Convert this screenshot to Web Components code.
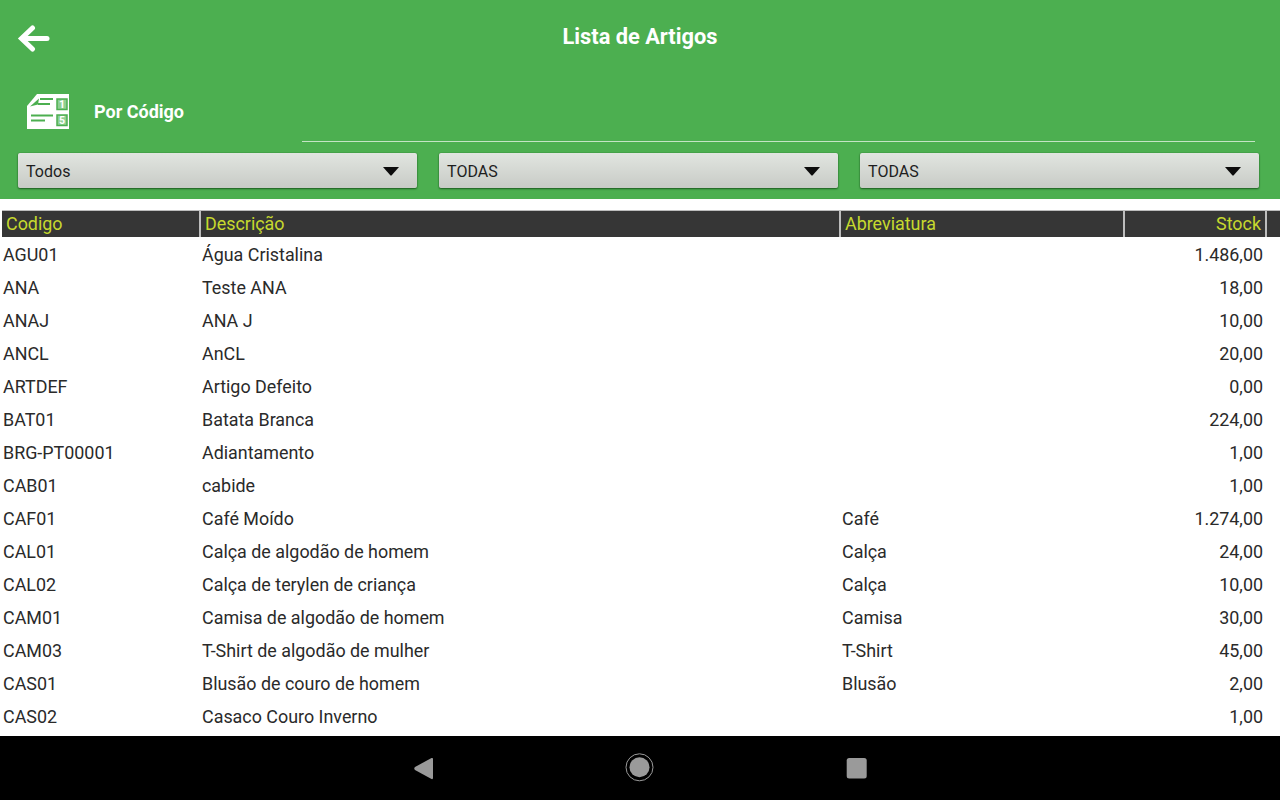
<!DOCTYPE html>
<html lang="pt">
<head>
<meta charset="utf-8">
<title>Lista de Artigos</title>
<style>
  html, body { margin: 0; padding: 0; height: 100%; overflow: hidden; background: #fff; font-family: Roboto, sans-serif; }
</style>
</head>
<body>
<app-screen>
  <top-bar title-text="Lista de Artigos" mode="Por Código" slot="top">
    <drop-down label="Todos"></drop-down>
    <drop-down label="TODAS"></drop-down>
    <drop-down label="TODAS"></drop-down>
  </top-bar>
  <artigos-table></artigos-table>
  <nav-bar slot="bottom"></nav-bar>
</app-screen>

<script>
class AppScreen extends HTMLElement {
  constructor () {
    super()
    this.attachShadow({ mode: 'open' })
  }

  connectedCallback () {
    this.shadowRoot.innerHTML = /* html */`
      <style>
        :host { display: flex; flex-direction: column; width: 1280px; height: 800px; overflow: hidden; }
        .content { flex: 1; min-height: 0; overflow: hidden; }
      </style>
      <slot name="top"></slot>
      <div class="content"><slot></slot></div>
      <slot name="bottom"></slot>
    `
  }
}

class TopBar extends HTMLElement {
  constructor () {
    super()
    this.attachShadow({ mode: 'open' })
  }

  connectedCallback () {
    this.shadowRoot.innerHTML = /* html */`
      <style>
        :host { display: block; height: 199px; background: #4caf50; color: #fff; box-sizing: border-box; }
        .title-row { display: grid; grid-template-columns: 60px 1fr 60px; height: 72px; align-items: center; }
        .back { display: block; margin: 6px 0 0 17px; }
        h1 { margin: 2px 0 0; font-size: 21.8px; font-weight: 700; text-align: center; line-height: 68px; }
        .mode-row { display: flex; height: 70px; padding: 0 25px 0 27px; }
        .mode { display: flex; align-items: center; width: 275px; flex: none; height: 80px; margin-top: -1px; }
        .mode svg { flex: none; }
        .mode span { margin-left: 25px; font-size: 18px; font-weight: 700; }
        .line { flex: 1; height: 1px; background: #c4e4c5; align-self: flex-end; }
        .filters { display: flex; gap: 22px; padding: 11px 20px 0 18px; }
      </style>
      <div class="title-row">
        <svg class="back" width="33" height="28" viewBox="0 0 33 28" fill="none" stroke="#fff" stroke-width="5" stroke-linecap="round" stroke-linejoin="miter">
          <path d="M30 13.5H6"/>
          <path d="M15.500 3 4.500 13.500 15.500 24"/>
        </svg>
        <h1>${this.getAttribute('title-text')}</h1>
        <span></span>
      </div>
      <div class="mode-row">
        <div class="mode">
          <svg width="42" height="35" viewBox="0 0 42 35">
            <path d="M10 0H42V35H0V12Z" fill="#fff"/>
            <path d="M3 12.500 12 4.500 11 10.500Z" fill="#4caf50"/>
            <path d="M13 5H26M11 10H23M4 21.500H26M4 26.500H18" stroke="#4caf50" stroke-width="2"/>
            <rect x="30" y="5" width="10" height="10.500" fill="#8fcf92" stroke="#4caf50" stroke-width="1.500"/>
            <rect x="30" y="21" width="10" height="10.500" fill="#8fcf92" stroke="#4caf50" stroke-width="1.500"/>
            <text x="35" y="14.200" font-family="Roboto, sans-serif" font-size="10.500" font-weight="700" fill="#fff" text-anchor="middle">1</text>
            <text x="35" y="30.200" font-family="Roboto, sans-serif" font-size="10.500" font-weight="700" fill="#fff" text-anchor="middle">5</text>
          </svg>
          <span>${this.getAttribute('mode')}</span>
        </div>
        <div class="line"></div>
      </div>
      <div class="filters"><slot></slot></div>
    `
  }
}

class DropDown extends HTMLElement {
  constructor () {
    super()
    this.attachShadow({ mode: 'open' })
  }

  connectedCallback () {
    this.shadowRoot.innerHTML = /* html */`
      <style>
        :host {
          display: flex; align-items: center; justify-content: space-between;
          width: 399px; height: 35px; box-sizing: border-box; padding: 2px 17px 0 8px;
          background: linear-gradient(#e1e5e0, #c8cbc6);
          border-radius: 2px;
          box-shadow: 0 1px 2px rgba(0, 40, 0, .6), 0 0 1px rgba(0, 40, 0, .55);
          color: #1e1e1e; font-size: 16px; letter-spacing: .05px;
        }
        svg { display: block; margin-top: -2px; }
      </style>
      <span>${this.getAttribute('label')}</span>
      <svg width="18" height="10" viewBox="0 0 18 10"><path d="M1 1H17L9.500 9.500H8.500Z" fill="#0c0c0c"/></svg>
    `
  }
}

class ArtigosTable extends HTMLElement {
  constructor () {
    super()
    this.attachShadow({ mode: 'open' })
  }

  connectedCallback () {
    this.loadData()
    this.render()
  }

  loadData () {
    this.data = [
      ['AGU01', 'Água Cristalina', '', '1.486,00'],
      ['ANA', 'Teste ANA', '', '18,00'],
      ['ANAJ', 'ANA J', '', '10,00'],
      ['ANCL', 'AnCL', '', '20,00'],
      ['ARTDEF', 'Artigo Defeito', '', '0,00'],
      ['BAT01', 'Batata Branca', '', '224,00'],
      ['BRG-PT00001', 'Adiantamento', '', '1,00'],
      ['CAB01', 'cabide', '', '1,00'],
      ['CAF01', 'Café Moído', 'Café', '1.274,00'],
      ['CAL01', 'Calça de algodão de homem', 'Calça', '24,00'],
      ['CAL02', 'Calça de terylen de criança', 'Calça', '10,00'],
      ['CAM01', 'Camisa de algodão de homem', 'Camisa', '30,00'],
      ['CAM03', 'T-Shirt de algodão de mulher', 'T-Shirt', '45,00'],
      ['CAS01', 'Blusão de couro de homem', 'Blusão', '2,00'],
      ['CAS02', 'Casaco Couro Inverno', '', '1,00']
    ]
  }

  render () {
    const rows = this.data.map((row) => `
      <div class="row">
        <span>${row[0]}</span>
        <span>${row[1]}</span>
        <span>${row[2]}</span>
        <span class="num">${row[3]}</span>
      </div>
    `).join('')

    this.shadowRoot.innerHTML = /* html */`
      <style>
        :host { display: block; padding-top: 11px; font-size: 17.9px; color: #2a2a2a; background: #fff; }
        .head, .row { display: grid; grid-template-columns: 199px 640px 284px 142px 1fr; }
        .head { height: 28px; margin-left: 2px; }
        .head span {
          display: block; background: #363636; color: #c6d92e; line-height: 26px; padding-left: 4px;
          border-top: 1px solid #bdbdbd; border-right: 2px solid #bdbdbd; box-sizing: border-box; height: 27px;
        }
        .head span:last-child { border-right: 0; }
        .head .num { text-align: right; padding: 0 4px 0 0; }
        .row { height: 33px; line-height: 33px; padding-left: 3px; }
        .row span { white-space: nowrap; }
        .row .num { text-align: right; padding-right: 5px; }
      </style>
      <div class="head">
        <span>Codigo</span><span>Descrição</span><span>Abreviatura</span><span class="num">Stock</span><span></span>
      </div>
      ${rows}
    `
  }
}

class NavBar extends HTMLElement {
  constructor () {
    super()
    this.attachShadow({ mode: 'open' })
  }

  connectedCallback () {
    this.shadowRoot.innerHTML = /* html */`
      <style>
        :host { display: flex; justify-content: center; align-items: center; gap: 186px; height: 64px; background: #000; flex: none; padding-bottom: 2px; box-sizing: border-box; }
        svg { display: block; }
      </style>
      <svg width="30" height="30" viewBox="0 0 30 30"><path d="M24 7V26Q24 27.500 22.500 27L6 18Q4.500 16.500 6 15L22.500 6Q24 5.500 24 7Z" fill="#9a9a9a"/></svg>
      <svg width="30" height="30" viewBox="0 0 30 30"><circle cx="14.500" cy="15.300" r="13.500" fill="none" stroke="#9a9a9a"/><circle cx="14.500" cy="15.300" r="10" fill="#9a9a9a"/></svg>
      <svg width="30" height="30" viewBox="0 0 30 30"><rect x="5.700" y="6" width="20" height="20.500" rx="2.500" fill="#9a9a9a"/></svg>
    `
  }
}

customElements.define('app-screen', AppScreen)
customElements.define('top-bar', TopBar)
customElements.define('drop-down', DropDown)
customElements.define('artigos-table', ArtigosTable)
customElements.define('nav-bar', NavBar)
</script>
</body>
</html>
